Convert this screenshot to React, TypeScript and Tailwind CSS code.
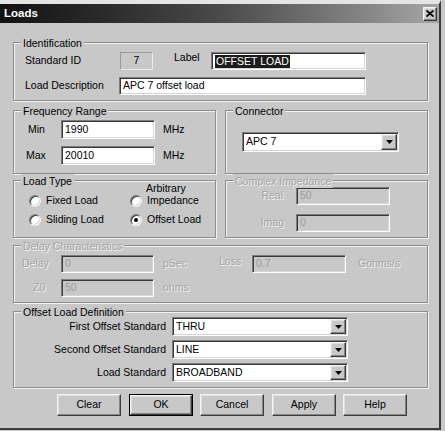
import type { ReactNode } from "react";

// classic 3D edges
const sunken =
  "border border-t-[#7c7c7c] border-l-[#7c7c7c] border-b-white border-r-white shadow-[inset_1px_1px_0_#383838,inset_-1px_-1px_0_#d6d6d6]";
const raised =
  "border border-t-[#f4f4f4] border-l-[#f4f4f4] border-b-[#3c3c3c] border-r-[#3c3c3c] shadow-[inset_-1px_-1px_0_#848484,inset_1px_1px_0_#dedede]";
const dim = "text-[#a4a4a4] [text-shadow:1px_1px_0_#f4f4f4]";

function Group({
  title,
  disabled,
  className,
  children,
}: {
  title: string;
  disabled?: boolean;
  className: string;
  children?: ReactNode;
}) {
  return (
    <div
      className={`relative shrink-0 border border-[#8c8c8c] shadow-[inset_1px_1px_0_#f2f2f2,1px_1px_0_#f2f2f2] ${className}`}
    >
      <span
        className={`absolute -top-[7px] left-[7px] px-[2px] bg-[#c8c8c8] leading-[14px] whitespace-nowrap ${
          disabled ? dim : ""
        }`}
      >
        {title}
      </span>
      {children}
    </div>
  );
}

function Edit({
  value,
  className,
  disabled,
  children,
}: {
  value?: string;
  className: string;
  disabled?: boolean;
  children?: ReactNode;
}) {
  return (
    <div
      className={`shrink-0 flex items-center pl-[3px] ${sunken} ${
        disabled ? "bg-[#c8c8c8] text-[#9c9c9c]" : "bg-white"
      } ${className}`}
    >
      {children ?? value}
    </div>
  );
}

function Combo({ value, className }: { value: string; className: string }) {
  return (
    <div className={`shrink-0 flex items-stretch p-[1px] bg-white ${sunken} ${className}`}>
      <span className="flex-1 flex items-center pl-[2px]">{value}</span>
      <span className={`w-[16px] flex items-center justify-center bg-[#c8c8c8] ${raised}`}>
        <svg width="7" height="4" viewBox="0 0 7 4">
          <path d="M0 0h7L3.5 4z" fill="#000" />
        </svg>
      </span>
    </div>
  );
}

function Radio({ label, checked }: { label: string; checked?: boolean }) {
  return (
    <div className="flex items-center gap-[5px]">
      <span className="relative w-[12px] h-[12px] shrink-0 rounded-full bg-white border border-t-[#7c7c7c] border-l-[#7c7c7c] border-b-[#f4f4f4] border-r-[#f4f4f4] shadow-[inset_1px_1px_0_#383838,inset_-1px_-1px_0_#d6d6d6] flex items-center justify-center">
        {checked && <span className="w-[4px] h-[4px] rounded-full bg-black" />}
      </span>
      <span className="leading-[13px]">{label}</span>
    </div>
  );
}

function Button({ label, primary }: { label: string; primary?: boolean }) {
  if (primary) {
    return (
      <div className="w-[64px] h-[22px] border border-black flex">
        <div className={`flex-1 flex items-center justify-center bg-[#c8c8c8] ${raised}`}>{label}</div>
      </div>
    );
  }
  return (
    <div className={`w-[64px] h-[22px] flex items-center justify-center bg-[#c8c8c8] ${raised}`}>
      {label}
    </div>
  );
}

export default function App() {
  return (
    <div className="w-[445px] h-[431px] overflow-hidden bg-[#c8c8c8] text-[10.5px] text-black font-['Liberation_Sans',Arial,sans-serif]">
      <div className="w-[441px] h-[430px] flex flex-col border-t-4 border-t-[#e4e4e4] border-r-2 border-r-[#3c3c3c] border-b-2 border-b-[#3c3c3c] bg-[#c8c8c8]">
        {/* Title bar */}
        <div className="h-[19px] shrink-0 flex items-center justify-between bg-linear-to-r from-[#121212] via-[#4a4a4a] to-[#a6a6a6]">
          <span className="pl-[4px] text-white font-bold text-[11.5px] leading-none">Loads</span>
          <span className={`mr-[2px] w-[14px] h-[14px] flex items-center justify-center bg-[#c8c8c8] ${raised}`}>
            <svg width="8" height="7" viewBox="0 0 8 7">
              <path d="M0.5 0.5L7.5 6.5M7.5 0.5L0.5 6.5" stroke="#000" strokeWidth="1.8" />
            </svg>
          </span>
        </div>

        <div className="flex flex-col pl-[13px] pt-[19px]">
          {/* Identification */}
          <Group title="Identification" className="w-[415px] h-[59px]">
            <div className="mt-[9px] h-[18px] flex items-center">
              <span className="ml-[11px] w-[95px]">Standard ID</span>
              <div className="w-[33px] h-[18px] flex items-center justify-center border border-t-[#9a9a9a] border-l-[#9a9a9a] border-b-[#ececec] border-r-[#ececec]">
                7
              </div>
              <span className="ml-[21px] w-[37px] mb-[6px]">Label</span>
              <Edit className="w-[155px] h-[18px]">
                <span className="bg-[#1c1c1c] text-white px-[1px] leading-[13px]">OFFSET LOAD</span>
              </Edit>
            </div>
            <div className="mt-[7px] h-[18px] flex items-center">
              <span className="ml-[11px] w-[94px]">Load Description</span>
              <Edit value="APC 7 offset load" className="w-[247px] h-[18px]" />
            </div>
          </Group>

          <div className="mt-[9px] flex">
            {/* Frequency Range */}
            <Group title="Frequency Range" className="w-[203px] h-[64px]">
              <div className="mt-[9px] h-[19px] flex items-center">
                <span className="ml-[14px] w-[33px]">Min</span>
                <Edit value="1990" className="w-[94px] h-[19px]" />
                <span className="ml-[8px]">MHz</span>
              </div>
              <div className="mt-[7px] h-[19px] flex items-center">
                <span className="ml-[12px] w-[35px]">Max</span>
                <Edit value="20010" className="w-[94px] h-[19px]" />
                <span className="ml-[8px]">MHz</span>
              </div>
            </Group>

            {/* Connector */}
            <Group title="Connector" className="ml-[9px] w-[203px] h-[64px]">
              <Combo value="APC 7" className="mt-[21px] ml-[16px] w-[157px] h-[20px]" />
            </Group>
          </div>

          <div className="mt-[6px] flex">
            {/* Load Type */}
            <Group title="Load Type" className="w-[203px] h-[58px]">
              <div className="mt-[1px] ml-[132px] leading-[13px]">Arbitrary</div>
              <div className="-mt-[1px] ml-[15px] flex">
                <div className="w-[101px]">
                  <Radio label="Fixed Load" />
                </div>
                <Radio label="Impedance" />
              </div>
              <div className="mt-[6px] ml-[15px] flex">
                <div className="w-[101px]">
                  <Radio label="Sliding Load" />
                </div>
                <Radio label="Offset Load" checked />
              </div>
            </Group>

            {/* Complex Impedance */}
            <Group title="Complex Impedance" disabled className="ml-[9px] w-[203px] h-[58px]">
              <div className="mt-[6px] h-[18px] flex items-center">
                <span className={`w-[57px] text-right ${dim}`}>Real</span>
                <Edit value="50" disabled className="ml-[13px] w-[94px] h-[18px]" />
              </div>
              <div className="mt-[9px] h-[18px] flex items-center">
                <span className={`w-[58px] text-right ${dim}`}>Imag</span>
                <Edit value="0" disabled className="ml-[12px] w-[94px] h-[18px]" />
              </div>
            </Group>
          </div>

          {/* Delay Characteristics */}
          <Group title="Delay Characteristics" disabled className="mt-[7px] w-[415px] h-[58px]">
            <div className="mt-[9px] h-[18px] flex items-center">
              <span className={`ml-[8px] w-[39px] ${dim}`}>Delay</span>
              <Edit value="0" disabled className="w-[93px] h-[18px]" />
              <span className={`ml-[9px] w-[56px] ${dim}`}>pSec</span>
              <span className={`w-[33px] mb-[5px] ${dim}`}>Loss</span>
              <Edit value="0.7" disabled className="w-[94px] h-[18px]" />
              <span className={`ml-[12px] ${dim}`}>Gohms/s</span>
            </div>
            <div className="mt-[6px] h-[18px] flex items-center">
              <span className={`ml-[19px] w-[28px] ${dim}`}>Z0</span>
              <Edit value="50" disabled className="w-[93px] h-[18px]" />
              <span className={`ml-[9px] ${dim}`}>ohms</span>
            </div>
          </Group>

          {/* Offset Load Definition */}
          <Group title="Offset Load Definition" className="mt-[8px] w-[415px] h-[77px]">
            <div className="mt-[5px] flex flex-col gap-[4px]">
              {[
                ["First Offset Standard", "THRU"],
                ["Second Offset Standard", "LINE"],
                ["Load Standard", "BROADBAND"],
              ].map(([label, value]) => (
                <div key={label} className="h-[19px] flex items-center">
                  <span className="w-[152px] text-right">{label}</span>
                  <Combo value={value} className="ml-[6px] w-[176px] h-[19px]" />
                </div>
              ))}
            </div>
          </Group>

          {/* Buttons */}
          <div className="mt-[6px] ml-[44px] flex">
            <Button label="Clear" />
            <div className="ml-[8px]">
              <Button label="OK" primary />
            </div>
            <div className="ml-[7px]">
              <Button label="Cancel" />
            </div>
            <div className="ml-[8px]">
              <Button label="Apply" />
            </div>
            <div className="ml-[7px]">
              <Button label="Help" />
            </div>
          </div>
        </div>
      </div>
    </div>
  );
}
